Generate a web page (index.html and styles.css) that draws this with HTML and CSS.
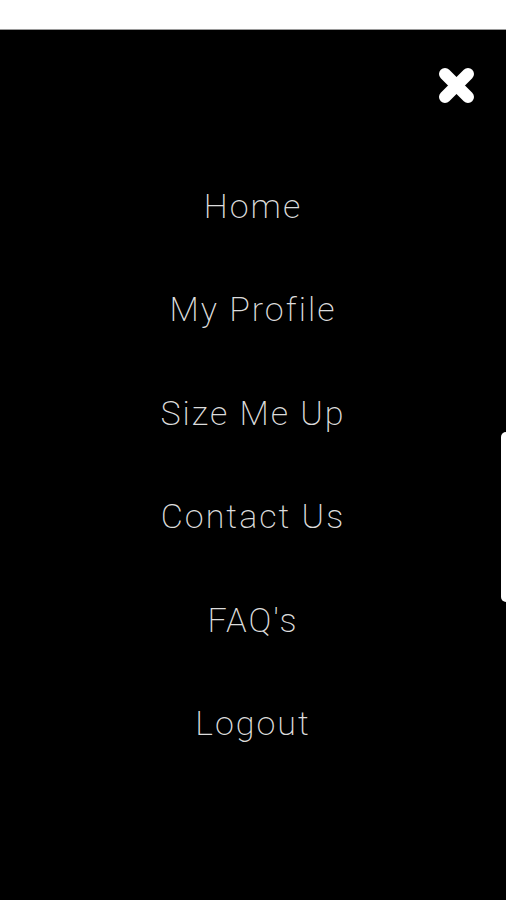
FILE: index.html
```html
<!DOCTYPE html>
<html lang="en">
<head>
  <meta charset="UTF-8">
  <meta name="viewport" content="width=device-width, initial-scale=1.0">
  <title>Menu</title>
  <link rel="stylesheet" href="styles.css">
</head>
<body>
  <div class="status-bar"></div>
  <div class="drawer">
    <div class="close-row">
      <button class="close-btn" aria-label="Close">
        <svg width="37" height="37" viewBox="0 0 37 37">
          <path d="M7 7 L30 30 M30 7 L7 30" stroke="#fff" stroke-width="12" stroke-linecap="round" fill="none"/>
        </svg>
      </button>
    </div>
    <nav class="menu">
      <a href="#">Home</a>
      <a href="#">My Profile</a>
      <a href="#">Size Me Up</a>
      <a href="#">Contact Us</a>
      <a href="#">FAQ's</a>
      <a href="#">Logout</a>
    </nav>
    <div class="side-tab"></div>
  </div>
</body>
</html>
```

FILE: styles.css
```css
* {
  margin: 0;
  padding: 0;
  box-sizing: border-box;
}
html, body {
  height: 100%;
}
body {
  font-family: Roboto, "Noto Sans", sans-serif;
  background: #000;
  display: flex;
  flex-direction: column;
}
.status-bar {
  height: 30px;
  background: #fff;
  border-bottom: 1px solid #9a9a9a;
}
.drawer {
  position: relative;
  flex: 1;
  background: #000;
}
.close-row {
  display: flex;
  justify-content: flex-end;
  padding: 37px 31px 0 0;
}
.close-btn {
  background: none;
  border: none;
  width: 37px;
  height: 37px;
  display: block;
}
.close-btn svg {
  display: block;
}
.menu {
  display: flex;
  flex-direction: column;
  margin-top: 50px;
}
.menu a {
  height: 103.5px;
  display: flex;
  align-items: center;
  justify-content: center;
  color: #dcdcdc;
  text-decoration: none;
  font-weight: 200;
  font-size: 34px;
  letter-spacing: 2px;
}
.side-tab {
  position: absolute;
  right: 0;
  top: 402px;
  width: 5px;
  height: 170px;
  background: #fff;
  border-radius: 6px 0 0 6px;
}
```
